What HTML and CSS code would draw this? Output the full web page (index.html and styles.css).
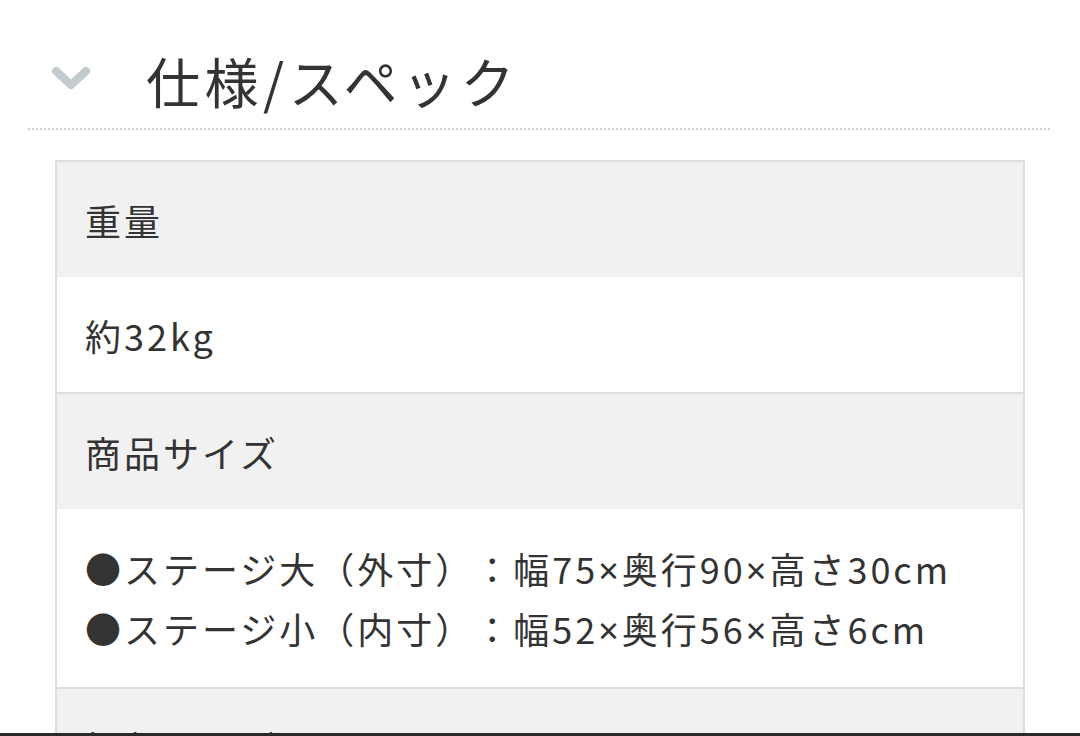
FILE: index.html
```html
<!DOCTYPE html>
<html lang="ja">
<head>
<meta charset="utf-8">
<link rel="stylesheet" href="styles.css">
</head>
<body>
<section class="spec">
  <header class="spec-head">
    <svg class="chevron" width="40" height="26" viewBox="0 0 40 26" aria-hidden="true">
      <polyline points="5,5 20,19 35,5" fill="none" stroke="#c4cbcf" stroke-width="8" stroke-linecap="round" stroke-linejoin="round"/>
    </svg>
    <h2 class="spec-title">仕様/スペック</h2>
  </header>
  <div class="dotted"></div>
  <div class="table">
    <div class="row th">重量</div>
    <div class="row td">約32kg</div>
    <div class="row th">商品サイズ</div>
    <div class="row td multi">●ステージ大（外寸）：幅75<span class="x">×</span>奥行90<span class="x">×</span>高さ30cm<br>●ステージ小（内寸）：幅52<span class="x">×</span>奥行56<span class="x">×</span>高さ6cm</div>
    <div class="row th">梱包サイズ</div>
  </div>
</section>
<div class="bottom-bar"></div>
</body>
</html>
```

FILE: styles.css
```css
html, body {
  margin: 0;
  padding: 0;
  background: #ffffff;
  overflow: hidden;
}
body {
  width: 1080px;
  height: 736px;
  font-family: "Noto Sans CJK JP", "Noto Sans", sans-serif;
  color: #333333;
  text-spacing-trim: space-all;
}
.spec-head {
  display: flex;
  align-items: center;
  height: 94px;
  margin-top: 34px;
  padding-left: 51px;
}
.chevron {
  display: block;
  flex: none;
  margin-top: -4px;
}
.spec-title {
  margin: 0 0 0 55px;
  font-size: 54px;
  font-weight: 400;
  letter-spacing: 4.5px;
  line-height: 1;
  color: #333333;
}
.dotted {
  height: 2px;
  margin: 0 28px;
  background-image: repeating-linear-gradient(to right, #cfcfcf 0, #cfcfcf 2px, transparent 2px, transparent 4px);
}
.table {
  margin: 30px 55px 0;
  border: 2px solid #dddddd;
  border-bottom: none;
}
.row {
  padding: 28px 28px 27px;
  font-size: 36px;
  line-height: 60px;
  letter-spacing: 3px;
  color: #333333;
}
.x {
  font-family: "Noto Sans", sans-serif;
  line-height: 1;
}
.th {
  background: #f1f1f1;
}
.td {
  background: #ffffff;
  border-bottom: 2px solid #dddddd;
}
.multi {
  padding-top: 29px;
  padding-bottom: 29px;
}
.bottom-bar {
  position: fixed;
  left: 0;
  right: 0;
  bottom: 0;
  height: 3px;
  background: #2a2a2a;
}
```
